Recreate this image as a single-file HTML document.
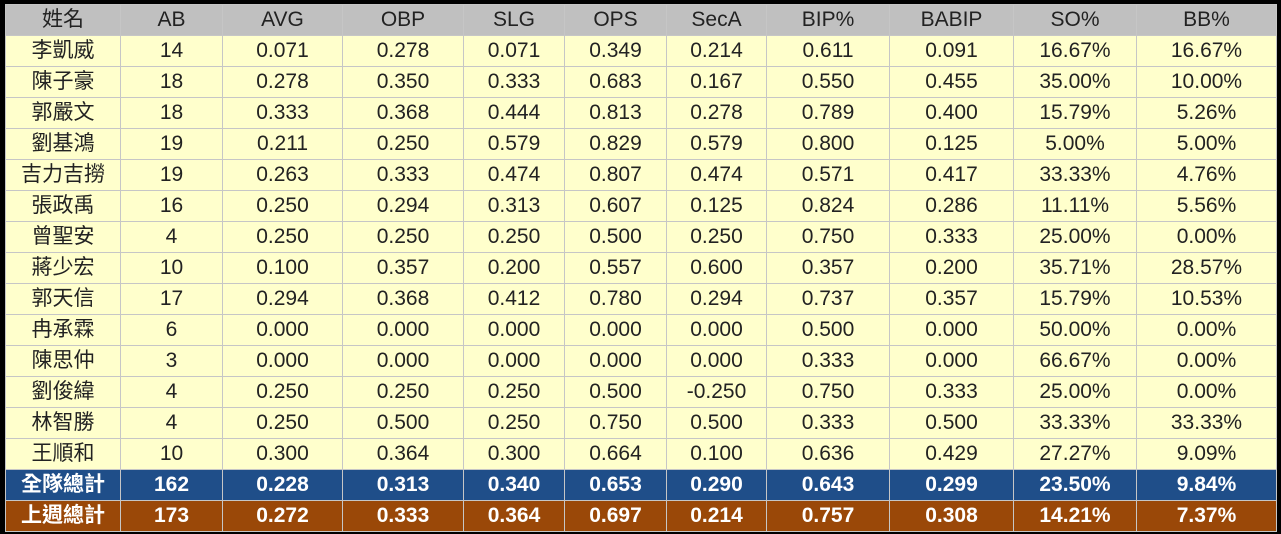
<!DOCTYPE html>
<html><head><meta charset="utf-8"><style>
html,body{margin:0;padding:0;background:#000;width:1281px;height:534px;overflow:hidden}
table{position:absolute;left:5px;top:4px;border-collapse:collapse;table-layout:fixed;font-family:"Liberation Sans","Noto Sans CJK TC",sans-serif;font-size:21px;color:#222}
td{height:30px;padding:0;text-align:center;border:1px solid #c6c6c6;background:#ffffcc;line-height:30px;white-space:nowrap;overflow:hidden}
tr.h td{background:#c0c0c0;color:#222}
tr.b td{background:#1f4e89;color:#fff;font-weight:bold}
tr.r td{background:#9a4808;color:#fff;font-weight:bold}
</style></head><body>
<table>
<colgroup><col style="width:115px"><col style="width:102px"><col style="width:120px"><col style="width:121px"><col style="width:101px"><col style="width:102px"><col style="width:100px"><col style="width:123px"><col style="width:124px"><col style="width:123px"><col style="width:140px"></colgroup>
<tr class="h"><td>姓名</td><td>AB</td><td>AVG</td><td>OBP</td><td>SLG</td><td>OPS</td><td>SecA</td><td>BIP%</td><td>BABIP</td><td>SO%</td><td>BB%</td></tr>
<tr><td>李凱威</td><td>14</td><td>0.071</td><td>0.278</td><td>0.071</td><td>0.349</td><td>0.214</td><td>0.611</td><td>0.091</td><td>16.67%</td><td>16.67%</td></tr>
<tr><td>陳子豪</td><td>18</td><td>0.278</td><td>0.350</td><td>0.333</td><td>0.683</td><td>0.167</td><td>0.550</td><td>0.455</td><td>35.00%</td><td>10.00%</td></tr>
<tr><td>郭嚴文</td><td>18</td><td>0.333</td><td>0.368</td><td>0.444</td><td>0.813</td><td>0.278</td><td>0.789</td><td>0.400</td><td>15.79%</td><td>5.26%</td></tr>
<tr><td>劉基鴻</td><td>19</td><td>0.211</td><td>0.250</td><td>0.579</td><td>0.829</td><td>0.579</td><td>0.800</td><td>0.125</td><td>5.00%</td><td>5.00%</td></tr>
<tr><td>吉力吉撈</td><td>19</td><td>0.263</td><td>0.333</td><td>0.474</td><td>0.807</td><td>0.474</td><td>0.571</td><td>0.417</td><td>33.33%</td><td>4.76%</td></tr>
<tr><td>張政禹</td><td>16</td><td>0.250</td><td>0.294</td><td>0.313</td><td>0.607</td><td>0.125</td><td>0.824</td><td>0.286</td><td>11.11%</td><td>5.56%</td></tr>
<tr><td>曾聖安</td><td>4</td><td>0.250</td><td>0.250</td><td>0.250</td><td>0.500</td><td>0.250</td><td>0.750</td><td>0.333</td><td>25.00%</td><td>0.00%</td></tr>
<tr><td>蔣少宏</td><td>10</td><td>0.100</td><td>0.357</td><td>0.200</td><td>0.557</td><td>0.600</td><td>0.357</td><td>0.200</td><td>35.71%</td><td>28.57%</td></tr>
<tr><td>郭天信</td><td>17</td><td>0.294</td><td>0.368</td><td>0.412</td><td>0.780</td><td>0.294</td><td>0.737</td><td>0.357</td><td>15.79%</td><td>10.53%</td></tr>
<tr><td>冉承霖</td><td>6</td><td>0.000</td><td>0.000</td><td>0.000</td><td>0.000</td><td>0.000</td><td>0.500</td><td>0.000</td><td>50.00%</td><td>0.00%</td></tr>
<tr><td>陳思仲</td><td>3</td><td>0.000</td><td>0.000</td><td>0.000</td><td>0.000</td><td>0.000</td><td>0.333</td><td>0.000</td><td>66.67%</td><td>0.00%</td></tr>
<tr><td>劉俊緯</td><td>4</td><td>0.250</td><td>0.250</td><td>0.250</td><td>0.500</td><td>-0.250</td><td>0.750</td><td>0.333</td><td>25.00%</td><td>0.00%</td></tr>
<tr><td>林智勝</td><td>4</td><td>0.250</td><td>0.500</td><td>0.250</td><td>0.750</td><td>0.500</td><td>0.333</td><td>0.500</td><td>33.33%</td><td>33.33%</td></tr>
<tr><td>王順和</td><td>10</td><td>0.300</td><td>0.364</td><td>0.300</td><td>0.664</td><td>0.100</td><td>0.636</td><td>0.429</td><td>27.27%</td><td>9.09%</td></tr>
<tr class="b"><td>全隊總計</td><td>162</td><td>0.228</td><td>0.313</td><td>0.340</td><td>0.653</td><td>0.290</td><td>0.643</td><td>0.299</td><td>23.50%</td><td>9.84%</td></tr>
<tr class="r"><td>上週總計</td><td>173</td><td>0.272</td><td>0.333</td><td>0.364</td><td>0.697</td><td>0.214</td><td>0.757</td><td>0.308</td><td>14.21%</td><td>7.37%</td></tr>
</table>
</body></html>
